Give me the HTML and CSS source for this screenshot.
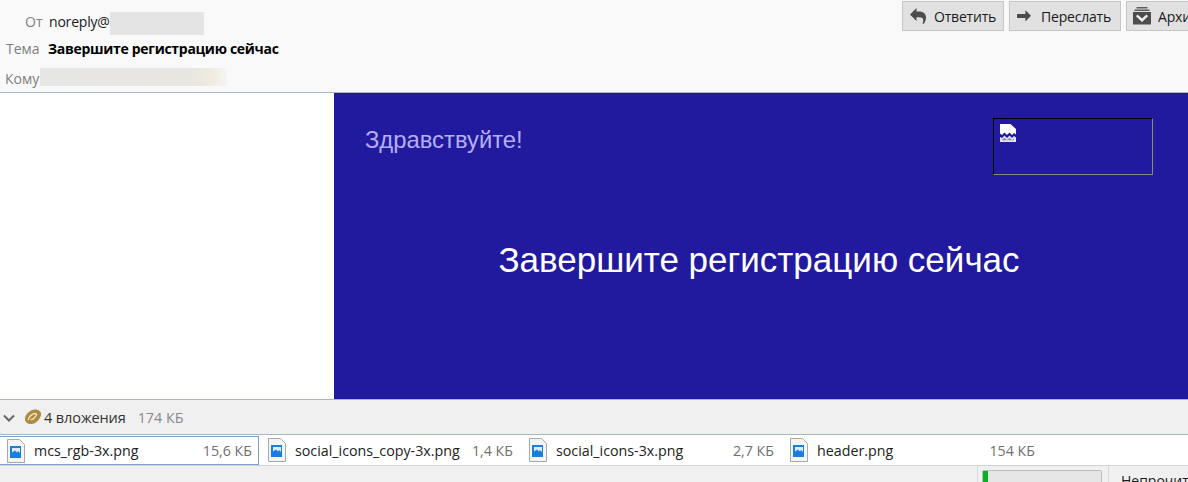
FILE: index.html
```html
<!DOCTYPE html>
<html lang="ru">
<head>
<meta charset="utf-8">
<title>Завершите регистрацию сейчас</title>
<link rel="stylesheet" href="styles.css">
</head>
<body>
<div class="app">
  <header class="head">
    <div class="fields">
      <div class="row row-from">
        <span class="label label-from">От</span>
        <span class="value">noreply@</span>
        <span class="redact redact-from"></span>
      </div>
      <div class="row row-subj">
        <span class="label label-subj">Тема</span>
        <strong class="subject">Завершите регистрацию сейчас</strong>
      </div>
      <div class="row row-to">
        <span class="label label-to">Кому</span>
        <span class="redact redact-to"></span>
      </div>
    </div>
    <div class="actions">
      <button class="btn btn-reply">
        <svg class="ico" width="16" height="16" viewBox="0 0 16 16"><path d="M0 6.500 6.500 0v3.500H9C13 3.500 16 5.500 16 9.500c0 2.300-.8 4.500-2.200 6.300h-1.300c.5-1.300.7-2.400.7-3.400 0-2-1.200-3.200-3.700-3.200H6.500V13z" fill="#4d4d4d"/></svg>
        Ответить
      </button>
      <button class="btn btn-forward">
        <svg class="ico" width="16" height="14" viewBox="0 0 16 14"><path d="M14 6.800 8.400 1.200v3.700H0v4h8.400v3.500z" fill="#4d4d4d"/></svg>
        Переслать
      </button>
      <button class="btn btn-archive">
        <svg class="ico" width="18" height="18" viewBox="0 0 18 18"><path d="M3.500 0h11v1.500h-11zM1.500 2.500h15V4h-15z" fill="#5c5c5c"/><path d="M0 5h18v12.500H0z" fill="#4d4d4d"/><path d="M4.500 7.500 9 11.500l4.500-4 1.500 1.700L9 15 3 9.200z" fill="#f0f0f0"/></svg>
        Архив
      </button>
    </div>
  </header>

  <main class="message">
    <div class="blank"></div>
    <section class="mail">
      <div class="mail-top">
        <p class="hello">Здравствуйте!</p>
        <div class="broken">
          <svg width="16" height="18" viewBox="0 0 16 18"><path d="M0 0h10.500L16 5v5.500L14 9l-2 2-2.500-2.500L7 11 4.500 8.500 2 11 0 9.500z" fill="#fff"/><path d="M0 13l2 1 2.500-2.500L7 14l2.500-2.500L12 14l2-2 2 1.500V18H0z" fill="#e4e4f2"/><path d="M2 15.800l2.500-2L7 16l2.500-2.200L12 16l2-1.500v1.800H2z" fill="#8d89c8"/></svg>
        </div>
      </div>
      <h1 class="title">Завершите регистрацию сейчас</h1>
    </section>
  </main>

  <div class="att-bar">
    <svg class="chev" width="12" height="8" viewBox="0 0 12 8"><path d="M1 1.500 6 6.500l5-5" fill="none" stroke="#666" stroke-width="2"/></svg>
    <svg class="clip" width="18" height="17" viewBox="0 0 18 17"><path d="M1 10C1 6 4 3 8 1c4-1.500 9 0 9 4 0 4-3 7-6 9-4 2-10 1-10-4z" fill="#ad8a42"/><path d="M4 11c1-3 4-6 7-6.500 2 0 2 1.500.5 3-1.500 2-3.500 3.500-5 3" fill="none" stroke="#ecdfb8" stroke-width="1.400"/></svg>
    <span class="att-count">4 вложения</span>
    <span class="att-size">174 КБ</span>
  </div>

  <ul class="att-list">
    <li class="att att-active">
      <svg class="file" width="18" height="24" viewBox="0 0 18 24"><path d="M.5.500h12l5 5v18H.5z" fill="#f4f4f4" stroke="#a8a8a8"/><rect x="3" y="7" width="11" height="12" fill="#1a7fdc"/><path d="M5 9h8v5l-2-2-1 1.500-2-2-3 2z" fill="#d8ecfb"/></svg>
      <span class="att-name">mcs_rgb-3x.png</span><span class="att-kb">15,6 КБ</span>
    </li>
    <li class="att">
      <svg class="file" width="18" height="24" viewBox="0 0 18 24"><path d="M.5.500h12l5 5v18H.5z" fill="#f4f4f4" stroke="#a8a8a8"/><rect x="3" y="7" width="11" height="12" fill="#1a7fdc"/><path d="M5 9h8v5l-2-2-1 1.500-2-2-3 2z" fill="#d8ecfb"/></svg>
      <span class="att-name">social_icons_copy-3x.png</span><span class="att-kb">1,4 КБ</span>
    </li>
    <li class="att">
      <svg class="file" width="18" height="24" viewBox="0 0 18 24"><path d="M.5.500h12l5 5v18H.5z" fill="#f4f4f4" stroke="#a8a8a8"/><rect x="3" y="7" width="11" height="12" fill="#1a7fdc"/><path d="M5 9h8v5l-2-2-1 1.500-2-2-3 2z" fill="#d8ecfb"/></svg>
      <span class="att-name">social_icons-3x.png</span><span class="att-kb">2,7 КБ</span>
    </li>
    <li class="att">
      <svg class="file" width="18" height="24" viewBox="0 0 18 24"><path d="M.5.500h12l5 5v18H.5z" fill="#f4f4f4" stroke="#a8a8a8"/><rect x="3" y="7" width="11" height="12" fill="#1a7fdc"/><path d="M5 9h8v5l-2-2-1 1.500-2-2-3 2z" fill="#d8ecfb"/></svg>
      <span class="att-name">header.png</span><span class="att-kb">154 КБ</span>
    </li>
  </ul>

  <footer class="status">
    <div class="status-sep">
      <div class="progress"><div class="progress-fill"></div></div>
    </div>
    <div class="unread">Непрочитанных: 0</div>
  </footer>
</div>
</body>
</html>
```

FILE: styles.css
```css
* { box-sizing: border-box; }
html, body { margin: 0; padding: 0; }
body {
  width: 1188px;
  height: 482px;
  overflow: hidden;
  font-family: "Open Sans", "Noto Sans", sans-serif;
  font-size: 13px;
  color: #1a1a1a;
  background: #f0f0f0;
}
.app { display: flex; flex-direction: column; width: 1188px; height: 482px; overflow: hidden; }

/* header */
.head {
  flex: 0 0 93px;
  min-height: 0;
  display: flex;
  justify-content: space-between;
  background: #f9f9f9;
  border-bottom: 1px solid #a9b6c9;
}
.fields { display: flex; flex-direction: column; padding-top: 8px; }
.row { display: flex; align-items: center; white-space: nowrap; }
.row-from { height: 26px; }
.row-subj { height: 28px; }
.row-to { height: 30px; }
.label { color: #7f7f7f; font-size: 14px; }
.label-from { margin-left: 25px; width: 24px; }
.label-subj { margin-left: 6px; width: 42px; }
.label-to { margin: 2px 0 0 5px; width: 35px; white-space: nowrap; }
.value { font-size: 14px; letter-spacing: -.2px; }
.subject { font-size: 14px; font-weight: 700; color: #000; letter-spacing: -.3px; }
.redact { display: block; background: #e4e4e4; filter: blur(.5px); }
.redact-from { width: 94px; height: 23px; margin-top: 5px; }
.redact-to { width: 187px; height: 18px; background: linear-gradient(90deg, #e6e6e6, #e8e6e0 80%, #f0ebdf 92%, #f5f5f3); }

.actions { display: flex; gap: 5px; padding-top: 1px; margin-right: -28px; align-items: flex-start; }
.btn {
  display: flex;
  align-items: center;
  height: 30px;
  padding: 0 0 0 7px;
  gap: 8px;
  font: 14px "Open Sans", "Noto Sans", sans-serif;
  letter-spacing: -.2px;
  white-space: nowrap;
  color: #1a1a1a;
  background: #e1e1e1;
  border: 1px solid #c6c6c6;
}
.btn-reply { width: 102px; }
.btn-forward { width: 112px; }
.btn-archive { width: 90px; padding-left: 6px; gap: 7px; }

/* message */
.message { flex: 0 0 307px; min-height: 0; display: flex; background: #fff; border-bottom: 1px solid #a9b6c9; }
.blank { flex: 0 0 334px; background: #fff; }
.mail { flex: 1; background: #211a9e; padding: 25px 35px 0 31px; }
.mail-top { display: flex; justify-content: space-between; align-items: flex-start; }
.hello {
  margin: 8px 0 0;
  font: 23.8px/28px "Liberation Sans", Arial, sans-serif;
  color: #b5aef7;
}
.broken {
  width: 160px;
  height: 57px;
  padding: 5px 0 0 6px;
  border: 1px solid;
  border-color: #000 #8a8a7a #8a8a7a #000;
}
.broken svg { display: block; }
.title {
  margin: 65px 0 0;
  text-align: center;
  font: 400 35px/40px "Liberation Sans", Arial, sans-serif;
  color: #fff;
}

/* attachments */
.att-bar {
  flex: 0 0 35px;
  min-height: 0;
  display: flex;
  align-items: center;
  padding: 1px 0 0 3px;
  background: #f0f0f0;
  border-bottom: 1px solid #a9b6c9;
}
.chev { margin-right: 9px; }
.clip { margin-right: 2px; }
.att-count { font-size: 14.5px; letter-spacing: -.1px; color: #333; }
.att-size { margin-left: 12px; font-size: 14.4px; color: #8a8a8a; }

.att-list {
  flex: 0 0 31px;
  min-height: 0;
  display: flex;
  margin: 0;
  padding: 0;
  list-style: none;
  background: #fff;
  border-bottom: 1px solid #d4d4d4;
}
.att {
  flex: 0 0 261px;
  width: 261px;
  display: flex;
  align-items: center;
  padding: 0 9px 0 7px;
  white-space: nowrap;
}
.att-active {
  flex: 0 0 259px;
  width: 259px;
  height: 29px;
  padding-right: 6px;
  border: 1px solid #7da2ce;
  border-left: 0;
  margin: 1px 2px 0 0;
}
.file { flex: none; margin-right: 10px; }
.att-name { flex: 1; font-size: 14.25px; color: #222; margin-left: -1px; }
.att-kb { font-size: 14.25px; color: #707070; }

/* status */
.status { flex: 1; display: flex; justify-content: flex-end; background: #f0f0f0; }
.status-sep { width: 132px; padding: 4px 0 0 4px; border-left: 1px solid #d8d8d8; border-right: 1px solid #d8d8d8; }
.progress { width: 120px; height: 20px; background: #e6e6e6; border: 1px solid #bcbcbc; border-radius: 2px; }
.progress-fill { width: 5px; height: 100%; background: #06b025; }
.unread { flex: 0 0 79px; padding: 5px 0 0 12px; font-size: 14px; white-space: nowrap; overflow: hidden; }
```
